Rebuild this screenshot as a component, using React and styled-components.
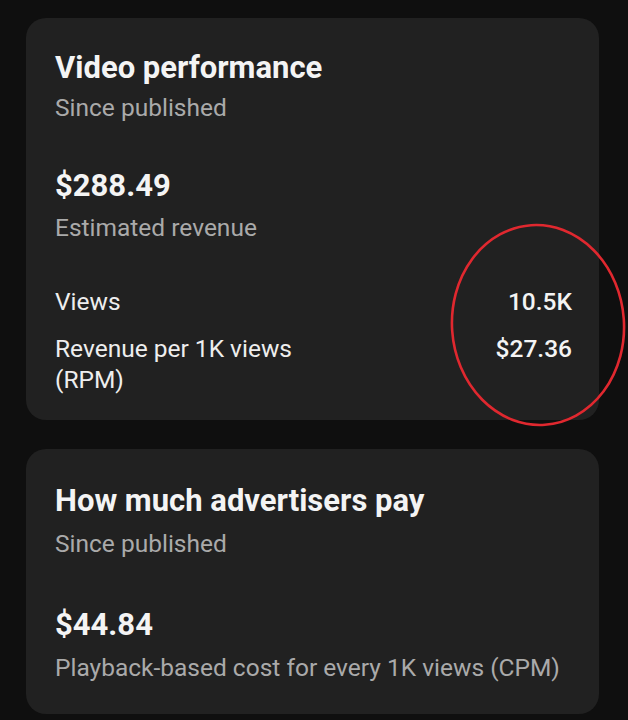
import React from 'react'
import styled, { createGlobalStyle } from 'styled-components'

const GlobalStyle = createGlobalStyle`
  html, body {
    margin: 0;
    padding: 0;
    background: #0f0f0f;
  }
  body {
    font-family: Roboto, "Noto Sans", "Liberation Sans", sans-serif;
    color: #f1f1f1;
  }
`

const stats = [
  { label: 'Views', value: '10.5K' },
  { label: 'Revenue per 1K views (RPM)', value: '$27.36' },
]

function App() {
  return (
    <Page>
      <GlobalStyle />
      <Card>
        <Title>Video performance</Title>
        <Subtitle>Since published</Subtitle>
        <Amount>$288.49</Amount>
        <Caption>Estimated revenue</Caption>
        <StatList>
          {stats.map((s) => (
            <StatRow key={s.label}>
              <StatLabel>{s.label}</StatLabel>
              <StatValue>{s.value}</StatValue>
            </StatRow>
          ))}
        </StatList>
      </Card>
      <Card $top={34} $bottom={31}>
        <Title>How much advertisers pay</Title>
        <Subtitle $gap={10}>Since published</Subtitle>
        <Amount $gap={48}>$44.84</Amount>
        <Caption $gap={10}>Playback-based cost for every 1K views (CPM)</Caption>
      </Card>
      <Circle width="180" height="206" viewBox="0 0 180 206">
        <ellipse
          cx="90"
          cy="103"
          rx="86"
          ry="100"
          fill="none"
          stroke="#e0282f"
          strokeWidth="2.6"
          transform="rotate(-4 90 103)"
        />
      </Circle>
    </Page>
  )
}

export default App

const Page = styled.div`
  position: relative;
  display: flex;
  flex-direction: column;
  gap: 29px;
  padding: 18px 29px 8px 26px;
  min-height: 720px;
  box-sizing: border-box;
`

const Card = styled.section`
  background: #212121;
  border-radius: 20px;
  padding: ${(p) => p.$top || 32}px 27px ${(p) => p.$bottom || 25}px 29px;
  display: flex;
  flex-direction: column;
`

const Title = styled.h2`
  margin: 0;
  font-size: 31px;
  line-height: 36px;
  font-weight: 700;
  color: #f4f4f4;
`

const Subtitle = styled.div`
  margin-top: ${(p) => p.$gap || 7}px;
  font-size: 24.5px;
  line-height: 30px;
  color: #aaaaaa;
`

const Amount = styled.div`
  margin-top: ${(p) => p.$gap || 45}px;
  font-size: 31px;
  line-height: 36px;
  font-weight: 700;
  color: #f4f4f4;
`

const Caption = styled.div`
  margin-top: ${(p) => p.$gap || 9}px;
  font-size: 24.5px;
  line-height: 30px;
  color: #aaaaaa;
`

const StatList = styled.div`
  margin-top: 43px;
  display: flex;
  flex-direction: column;
  gap: 16px;
`

const StatRow = styled.div`
  display: flex;
  justify-content: space-between;
  align-items: flex-start;
  font-size: 24.5px;
  line-height: 31px;
`

const StatLabel = styled.span`
  max-width: 300px;
  color: #eeeeee;
`

const StatValue = styled.span`
  color: #f4f4f4;
  font-weight: 500;
`

const Circle = styled.svg`
  position: absolute;
  left: 448px;
  top: 222px;
  pointer-events: none;
`
